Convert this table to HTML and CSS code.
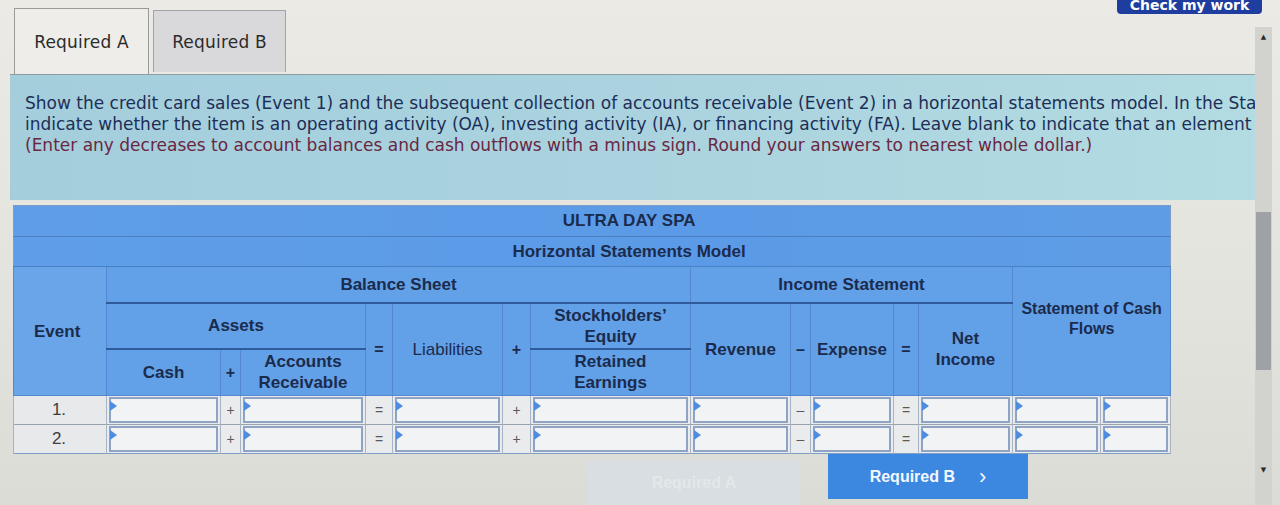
FILE: index.html
```html
<!DOCTYPE html>
<html lang="en">
<head>
<meta charset="utf-8">
<title>Horizontal Statements Model</title>
<link rel="stylesheet" href="styles.css">
</head>
<body>
<div class="screen">
  <div class="main">
    <div class="tabbar">
      <div class="tab active">Required A</div>
      <div class="tab">Required B</div>
      <div class="check-btn">Check my work</div>
    </div>
    <div class="instructions">
      <p class="lead">Show the credit card sales (Event 1) and the subsequent collection of accounts receivable (Event 2) in a horizontal statements model. In the Statement of Cash Flows column,<br>indicate whether the item is an operating activity (OA), investing activity (IA), or financing activity (FA). Leave blank to indicate that an element is not affected by the event.</p>
      <p class="note">(Enter any decreases to account balances and cash outflows with a minus sign. Round your answers to nearest whole dollar.)</p>
    </div>
    <table class="hsm">
      <colgroup>
        <col class="c-ev"><col class="c-cash"><col class="c-op1"><col class="c-ar"><col class="c-op2"><col class="c-liab"><col class="c-op3"><col class="c-se"><col class="c-rev"><col class="c-op4"><col class="c-exp"><col class="c-op5"><col class="c-ni"><col class="c-scf1"><col class="c-scf2">
      </colgroup>
      <tr class="title"><td colspan="15">ULTRA DAY SPA</td></tr>
      <tr class="title sub"><td colspan="15">Horizontal Statements Model</td></tr>
      <tr class="h3">
        <th rowspan="3" class="ev-h">Event</th>
        <th colspan="7" class="grp">Balance Sheet</th>
        <th colspan="5" class="grp">Income Statement</th>
        <th colspan="2" rowspan="3" class="scf-h">Statement of Cash<br>Flows</th>
      </tr>
      <tr class="h4">
        <th colspan="3" class="grp">Assets</th>
        <th rowspan="2" class="op-h">=</th>
        <th rowspan="2" class="liab-h">Liabilities</th>
        <th rowspan="2" class="op-h">+</th>
        <th class="grp se-h">Stockholders’<br>Equity</th>
        <th rowspan="2">Revenue</th>
        <th rowspan="2" class="op-h">–</th>
        <th rowspan="2">Expense</th>
        <th rowspan="2" class="op-h">=</th>
        <th rowspan="2">Net<br>Income</th>
      </tr>
      <tr class="h5">
        <th>Cash</th>
        <th class="op-h">+</th>
        <th>Accounts<br>Receivable</th>
        <th>Retained<br>Earnings</th>
      </tr>
      <tr class="data">
        <td class="ev">1.</td>
        <td class="in"><div class="box"></div></td>
        <td class="op">+</td>
        <td class="in"><div class="box"></div></td>
        <td class="op">=</td>
        <td class="in"><div class="box"></div></td>
        <td class="op">+</td>
        <td class="in"><div class="box"></div></td>
        <td class="in"><div class="box"></div></td>
        <td class="op">–</td>
        <td class="in"><div class="box"></div></td>
        <td class="op">=</td>
        <td class="in"><div class="box"></div></td>
        <td class="in"><div class="box"></div></td>
        <td class="in"><div class="box"></div></td>
      </tr>
      <tr class="data">
        <td class="ev">2.</td>
        <td class="in"><div class="box"></div></td>
        <td class="op">+</td>
        <td class="in"><div class="box"></div></td>
        <td class="op">=</td>
        <td class="in"><div class="box"></div></td>
        <td class="op">+</td>
        <td class="in"><div class="box"></div></td>
        <td class="in"><div class="box"></div></td>
        <td class="op">–</td>
        <td class="in"><div class="box"></div></td>
        <td class="op">=</td>
        <td class="in"><div class="box"></div></td>
        <td class="in"><div class="box"></div></td>
        <td class="in"><div class="box"></div></td>
      </tr>
    </table>
    <div class="nav">
      <div class="nav-btn prev">Required A</div>
      <div class="nav-btn next">Required B <span class="chev">›</span></div>
    </div>
  </div>
  <div class="vscroll">
    <div class="arrow up">▲</div>
    <div class="track"><div class="thumb"></div></div>
    <div class="arrow down">▼</div>
  </div>
</div>
</body>
</html>
```
FILE: styles.css
```css
* { box-sizing: border-box; }
html, body {
  margin: 0;
  padding: 0;
  width: 1280px;
  height: 505px;
  overflow: hidden;
}
body {
  background: linear-gradient(180deg, #ebeae5 0%, #e3e3dd 60%, #dcdcd6 100%);
  font-family: "DejaVu Sans", Verdana, sans-serif;
}
.screen {
  display: flex;
  width: 1280px;
  height: 505px;
}
.main {
  width: 1255px;
  flex: none;
}

/* Tabs */
.tabbar {
  display: flex;
  align-items: flex-start;
  padding-left: 14px;
  height: 74px;
}
.tab {
  margin-top: 10px;
  margin-left: 4px;
  width: 133px;
  height: 62px;
  display: flex;
  align-items: center;
  justify-content: center;
  font-size: 17px;
  letter-spacing: 0.2px;
  color: #2b2b2b;
  background: #d9d9dc;
  border: 1px solid #a4a4a6;
  border-bottom: none;
}
.tab.active {
  margin-top: 8px;
  margin-left: 0;
  width: 135px;
  height: 66px;
  background: #eeede9;
  border-color: #9a9a9a;
}
.check-btn {
  margin-left: auto;
  margin-right: -7px;
  margin-top: -16px;
  width: 145px;
  height: 30px;
  background: #1f3d9e;
  border-radius: 4px;
  color: #ffffff;
  font-weight: bold;
  font-size: 14px;
  display: flex;
  align-items: flex-end;
  justify-content: center;
  padding-bottom: 1px;
}

/* Instructions */
.instructions {
  margin-left: 10px;
  height: 126px;
  background: linear-gradient(90deg, #a4cedc 0%, #aad3df 50%, #b3dbe2 100%);
  border-top: 1px solid #8c9ea2;
  padding: 18px 0 0 15px;
  overflow: hidden;
  white-space: nowrap;
  font-size: 17px;
  letter-spacing: 0;
  line-height: 21px;
}
.instructions p { margin: 0; }
.lead { color: #1d2e57; }
.note { color: #6a2742; }

/* Table */
.hsm {
  margin: 5px 0 0 13px;
  width: 1157px;
  table-layout: fixed;
  border-collapse: collapse;
  font-family: "Liberation Sans", Arial, sans-serif;
  color: #1b2b4c;
  border: 1px solid #7d9cc6;
}
.c-ev { width: 93px; }
.c-cash { width: 114px; }
.c-op1 { width: 20px; }
.c-ar { width: 125px; }
.c-op2 { width: 27px; }
.c-liab { width: 110px; }
.c-op3 { width: 28px; }
.c-se { width: 160px; }
.c-rev { width: 100px; }
.c-op4 { width: 20px; }
.c-exp { width: 83px; }
.c-op5 { width: 25px; }
.c-ni { width: 94px; }
.c-scf1 { width: 88px; }
.c-scf2 { width: 70px; }

.title td {
  height: 31px;
  background: linear-gradient(90deg, #5f9de8 0%, #5b9ae6 60%, #5e9ce6 100%);
  text-align: center;
  padding: 0 0 0 74px;
  font-weight: bold;
  font-size: 17px;
  border-bottom: 1px solid #4b7fc4;
}
.title.sub td { height: 30px; }
.hsm th {
  background: #62a0e8;
  font-weight: bold;
  font-size: 17px;
  line-height: 21px;
  text-align: center;
  vertical-align: middle;
  padding: 0;
  border: 1px solid #5589cf;
}
.h3 th { height: 36px; }
.h4 th { height: 46px; }
.h5 th { height: 47px; }
.hsm th.grp { border-bottom: 2px solid #2f5a9c; }
.hsm th.ev-h { background: #6aa5e9; text-align: left; padding-left: 20px; }
.hsm th.op-h { font-size: 16px; }
.hsm th.liab-h { font-weight: normal; }
.hsm th.scf-h { font-size: 16px; line-height: 20px; vertical-align: top; padding-top: 32px; }

.data td {
  height: 29px;
  padding: 1px 2px;
  border-top: 1px solid #97a2ad;
  border-left: 1px solid #a7b4c3;
  border-right: 1px solid #a7b4c3;
  background: #e9ebec;
  vertical-align: middle;
}
.data td.ev {
  text-align: center;
  font-size: 17px;
  color: #3c3c3c;
  background: #e8e9ea;
  padding-left: 0;
  padding-right: 2px;
}
.data td.op {
  text-align: center;
  font-size: 14px;
  color: #5a5a5a;
  padding: 0;
}
.box {
  position: relative;
  height: 26px;
  background: #f2f3f4;
  border: 2px solid #8fa4c5;
}
.box::before {
  content: "";
  position: absolute;
  top: 2px;
  left: -1px;
  border-left: 7px solid #4d8ce0;
  border-top: 5px solid transparent;
  border-bottom: 5px solid transparent;
}

/* Nav buttons */
.nav {
  display: flex;
  gap: 28px;
  padding-left: 588px;
  margin-top: 0;
}
.nav-btn {
  height: 45px;
  display: flex;
  align-items: center;
  justify-content: center;
  font-family: "Liberation Sans", Arial, sans-serif;
  font-weight: bold;
  font-size: 16px;
}
.nav-btn.prev {
  width: 212px;
  margin-top: 6px;
  background: #d8dee1;
  color: #e3e8ea;
}
.nav-btn.next {
  width: 200px;
  background: #3c87e0;
  color: #f4f8fd;
  gap: 24px;
}
.chev { font-size: 22px; font-weight: normal; line-height: 1; }

/* Scrollbar */
.vscroll {
  width: 17px;
  margin-top: 27px;
  display: flex;
  flex-direction: column;
  background: #d2d3ce;
}
.arrow {
  height: 20px;
  font-size: 7px;
  color: #2a2a2a;
  display: flex;
  align-items: center;
  justify-content: center;
}
.track {
  flex: 1;
  padding: 165px 1px 0 1px;
}
.thumb {
  height: 158px;
  background: #9ea2a7;
}
.arrow.down { margin-bottom: 25px; }
```
